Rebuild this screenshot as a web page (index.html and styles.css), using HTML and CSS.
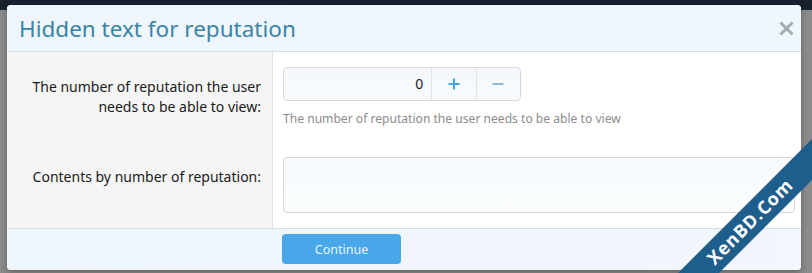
FILE: index.html
```html
<!DOCTYPE html>
<html lang="en">
<head>
  <meta charset="UTF-8">
  <title>Hidden text for reputation</title>
  <link rel="stylesheet" href="styles.css">
</head>
<body>
  <div class="overlay">
    <div class="modal">
      <div class="modal-head">
        <h2>Hidden text for reputation</h2>
        <span class="close">
          <svg width="15" height="15" viewBox="0 0 15 15"><path d="M1.5 1.5 L13.5 13.5 M13.5 1.5 L1.5 13.5" stroke="#a3adb3" stroke-width="3" fill="none"/></svg>
        </span>
      </div>

      <div class="modal-body">
        <div class="row first">
          <div class="label">The number of reputation the user needs to be able to view:</div>
          <div class="field">
            <div class="number-box">
              <div class="number-input">0</div>
              <span class="step">
                <svg width="12" height="12" viewBox="0 0 12 12"><path d="M6 0.5 V11.5 M0.5 6 H11.5" stroke="#47a2e0" stroke-width="2" fill="none"/></svg>
              </span>
              <span class="step">
                <svg width="12" height="12" viewBox="0 0 12 12"><path d="M0.5 6 H11.5" stroke="#8cb9dc" stroke-width="2" fill="none"/></svg>
              </span>
            </div>
            <p class="explain">The number of reputation the user needs to be able to view</p>
          </div>
        </div>

        <div class="row last">
          <div class="label">Contents by number of reputation:</div>
          <div class="field">
            <div class="textbox"></div>
          </div>
        </div>
      </div>

      <div class="modal-foot">
        <button>Continue</button>
      </div>
    </div>

    <div class="ribbon">XenBD.Com</div>
  </div>
</body>
</html>
```

FILE: styles.css
```css
body {
  margin: 0;
  font-family: "Noto Sans", "Open Sans", sans-serif;
  background: #8b8b8b;
  overflow: hidden;
}
.overlay {
  position: relative;
  height: 273px;
  overflow: hidden;
  padding: 5px 11px 0 7px;
  box-sizing: border-box;
  background: linear-gradient(#18222e 0, #18222e 10px, #8b8b8b 10px);
}
.modal {
  width: 794px;
  height: 265px;
  background: #fff;
  border-radius: 4px;
  overflow: hidden;
  display: flex;
  flex-direction: column;
  box-shadow: 0 2px 6px rgba(0, 0, 0, 0.3);
}
.modal-head {
  height: 46px;
  flex: none;
  display: flex;
  align-items: center;
  justify-content: space-between;
  padding: 0 5px 0 12px;
  background: linear-gradient(to right, #eef5fb, #f0f7fc);
  border-bottom: 1px solid #d6dde3;
}
.modal-head h2 {
  margin: 0;
  font-weight: normal;
  font-size: 22.5px;
  color: #3a84a7;
}
.close {
  display: flex;
  width: 20px;
  justify-content: center;
}
.modal-body {
  flex: 1;
  display: flex;
  flex-direction: column;
}
.row {
  display: flex;
}
.row.first {
  height: 90px;
}
.row.last {
  flex: 1;
}
.label {
  width: 254px;
  flex: none;
  padding: 25px 11px 0 0;
  background: #f5f5f5;
  border-right: 1px solid #e2e2e2;
  text-align: right;
  font-size: 14px;
  line-height: 20px;
  color: #1a1a1a;
}
.field {
  flex: 1;
  padding: 15px 6px 0 10px;
}
.number-box {
  display: flex;
  width: 238px;
  height: 34px;
  border: 1px solid #d8d8d8;
  border-radius: 4px;
  box-sizing: border-box;
  background: linear-gradient(#f4f8fc, #f7fafd);
}
.number-input {
  width: 149px;
  padding-right: 8px;
  box-sizing: border-box;
  text-align: right;
  line-height: 32px;
  font-size: 14px;
  color: #222;
}
.step {
  width: 44px;
  display: flex;
  align-items: center;
  justify-content: center;
  border-left: 1px solid #dfe4e8;
}
.explain {
  margin: 9px 0 0;
  font-size: 12.1px;
  color: #8c8c8c;
}
.textbox {
  height: 56px;
  border: 1px solid #d8d8d8;
  border-radius: 4px;
  box-sizing: border-box;
  background: linear-gradient(#f6f9fc, #fbfdfe);
}
.modal-foot {
  height: 42px;
  flex: none;
  border-top: 1px solid #d6dde3;
  background: linear-gradient(to right, #eef5fb, #f1f7fc);
  padding: 5px 0 0 275px;
  box-sizing: border-box;
}
.modal-foot button {
  width: 119px;
  height: 30px;
  border: none;
  border-radius: 4px;
  background: #47a7e8;
  color: #e8f4fd;
  font-family: "Noto Sans", "Open Sans", sans-serif;
  font-size: 12.5px;
  cursor: pointer;
}
.ribbon {
  position: absolute;
  left: 600px;
  top: 207px;
  width: 300px;
  height: 29px;
  line-height: 29px;
  transform: rotate(-45deg);
  background: #1e5d8c;
  color: #fff;
  text-align: center;
  font-family: "Open Sans", sans-serif;
  font-weight: bold;
  font-size: 18px;
  letter-spacing: 0.8px;
}
```
